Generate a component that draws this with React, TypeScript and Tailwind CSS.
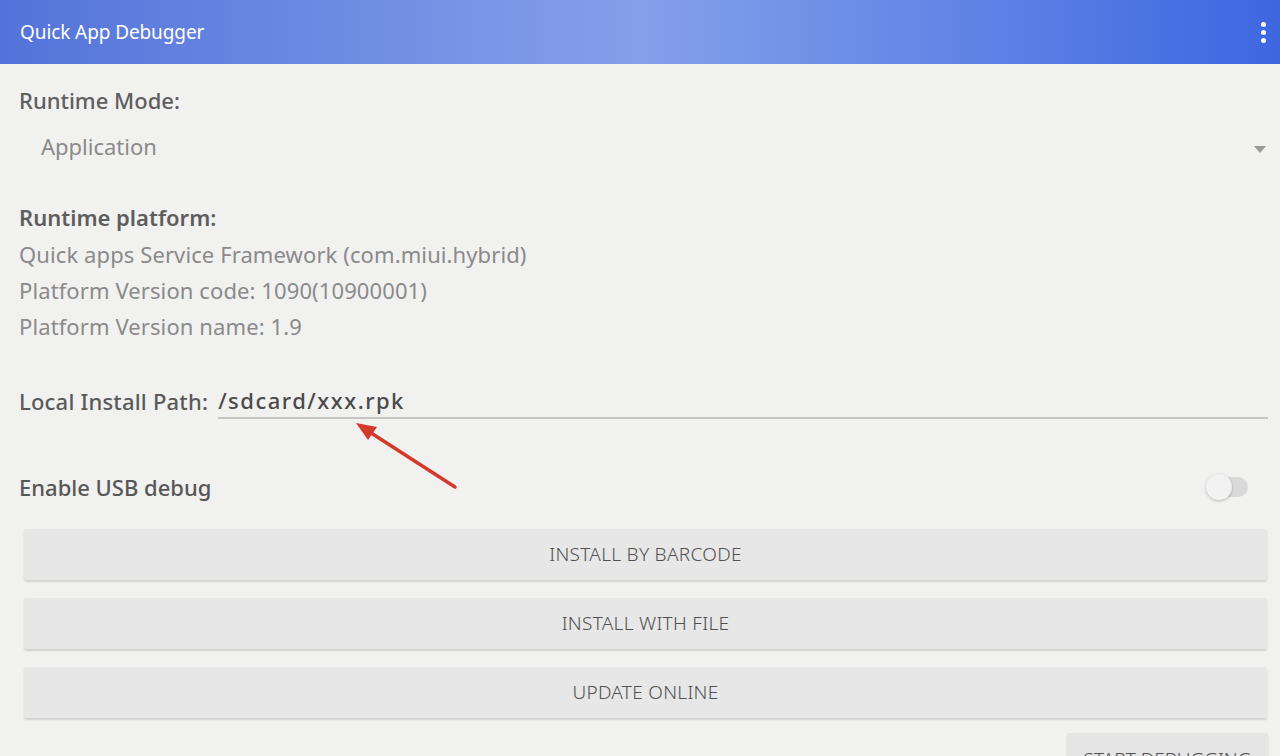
const INFO = [
  'Quick apps Service Framework (com.miui.hybrid)',
  'Platform Version code: 1090(10900001)',
  'Platform Version name: 1.9',
]

const BUTTONS = ['INSTALL BY BARCODE', 'INSTALL WITH FILE', 'UPDATE ONLINE']

export default function App() {
  return (
    <div
      className="relative w-[1280px] h-[756px] overflow-hidden bg-[#f1f1f0] text-[#5e5e5e]"
      style={{ fontFamily: '"Noto Sans", "Open Sans", sans-serif' }}
    >
      {/* Toolbar */}
      <header className="h-[64px] flex items-center justify-between pl-[20px] pr-[14px] bg-gradient-to-r from-[#5473da] via-[#85a0ea] to-[#3e66e0]">
        <span className="text-[19px] text-white tracking-[-0.1px]">Quick App Debugger</span>
        <div className="flex flex-col gap-[3px] items-center">
          <span className="w-[5px] h-[5px] rounded-full bg-white" />
          <span className="w-[5px] h-[5px] rounded-full bg-white" />
          <span className="w-[5px] h-[5px] rounded-full bg-white" />
        </div>
      </header>

      <main className="pl-[19px] pt-[22px]">
        {/* Runtime mode */}
        <p className="text-[22px] leading-[28px] font-medium">Runtime Mode:</p>
        <div className="h-[36px] mt-[14px] flex items-center justify-between pl-[22px] pr-[14px]">
          <span className="text-[22px] text-[#8a8a8a]">Application</span>
          <span className="w-0 h-0 border-l-[6px] border-r-[6px] border-t-[7px] border-l-transparent border-r-transparent border-t-[#9a9a9a] mt-[6px]" />
        </div>

        {/* Runtime platform */}
        <div className="mt-[39px] leading-[36px]">
          <p className="text-[22px] leading-[28px] font-semibold mt-[4px] mb-[5px]">Runtime platform:</p>
          {INFO.map((line) => (
            <p key={line} className="text-[22px] tracking-[0.1px] text-[#8a8a8a]">{line}</p>
          ))}
        </div>

        {/* Local install path */}
        <div className="mt-[39px] flex items-stretch pr-[12px]">
          <span className="text-[22px] leading-[36px] font-medium tracking-[0.2px] text-[#5a5a5a] pr-[10px]">Local Install Path:</span>
          <div className="flex-1 h-[36px] border-b-2 border-[#c4c4c4] text-[22px] leading-[34px] font-medium tracking-[1.5px] text-[#4a4a4a]">
            /sdcard/xxx.rpk
          </div>
        </div>

        {/* USB debug */}
        <div className="mt-[50px] h-[36px] flex items-center justify-between pr-[32px]">
          <span className="text-[22px] font-medium text-[#575757]">Enable USB debug</span>
          <div className="relative w-[42px] h-[26px] flex items-center">
            <span className="ml-[8px] w-[34px] h-[20px] rounded-full bg-[#d9d9d9]" />
            <span className="absolute left-0 top-0 w-[26px] h-[26px] rounded-full bg-[#f2f2f2] shadow-[0_1px_3px_rgba(0,0,0,0.25)]" />
          </div>
        </div>
      </main>

      {/* Action buttons */}
      <div className="mt-[24px] ml-[24px] mr-[13px] flex flex-col gap-[18px]">
        {BUTTONS.map((b) => (
          <div
            key={b}
            className="h-[51px] flex items-center justify-center rounded-[2px] bg-[#e7e7e7] shadow-[0_2px_2px_rgba(0,0,0,0.13)] text-[19px] font-light text-[#505050] tracking-[0.3px]"
          >
            {b}
          </div>
        ))}
      </div>

      {/* Bottom row (cut off by the screen edge) */}
      <div className="mt-[15px] flex items-start justify-between pl-[20px] pr-[12px]">
        <span className="text-[22px] leading-[28px] mt-[24px] text-[#a9a9a9]">com.application.demo</span>
        <div className="w-[201px] h-[48px] rounded-[2px] bg-[#e5e5e5] shadow-[0_2px_2px_rgba(0,0,0,0.13)] flex justify-center pt-[12px] text-[19px] font-light text-[#505050]">
          START DEBUGGING
        </div>
      </div>

      {/* Annotation arrow */}
      <svg className="absolute left-0 top-0 pointer-events-none" width="1280" height="756">
        <line x1="455" y1="487" x2="368" y2="431" stroke="#d33a2c" strokeWidth="3.5" strokeLinecap="round" />
        <polygon points="356,423 377,427 368,440" fill="#d33a2c" />
      </svg>
    </div>
  )
}
